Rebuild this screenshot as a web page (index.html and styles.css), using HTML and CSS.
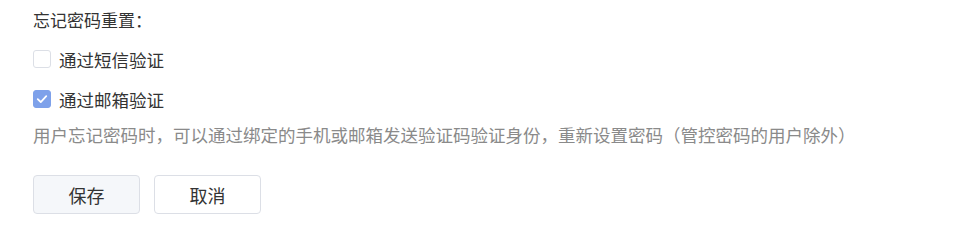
FILE: index.html
```html
<!DOCTYPE html>
<html lang="zh-CN">
<head>
    <meta charset="UTF-8">
    <meta name="viewport" content="width=device-width, initial-scale=1.0">
    <title>忘记密码重置</title>
    <link rel="stylesheet" href="styles.css">
</head>
<body>
    <div class="reset-panel">
        <div class="panel-title">忘记密码重置：</div>

        <div class="option-list">
            <label class="option">
                <span class="checkbox"></span>
                <span class="option-text">通过短信验证</span>
            </label>
            <label class="option">
                <span class="checkbox checked">
                    <svg viewBox="0 0 18 18" width="18" height="18">
                        <path d="M4.2 9.2 L7.6 12.4 L13.8 5.8" fill="none" stroke="#fff" stroke-width="2" stroke-linecap="round" stroke-linejoin="round"/>
                    </svg>
                </span>
                <span class="option-text">通过邮箱验证</span>
            </label>
        </div>

        <p class="hint">用户忘记密码时，可以通过绑定的手机或邮箱发送验证码验证身份，重新设置密码（管控密码的用户除外）</p>

        <div class="actions">
            <button class="btn btn-save">保存</button>
            <button class="btn">取消</button>
        </div>
    </div>
</body>
</html>
```

FILE: styles.css
```css
* {
    box-sizing: border-box;
    margin: 0;
    padding: 0;
}

body {
    font-family: "Microsoft YaHei", "Noto Sans CJK SC", "Noto Sans", sans-serif;
    background-color: #fff;
    color: #333;
}

.reset-panel {
    padding: 8px 0 0 33px;
}

.panel-title {
    font-size: 17px;
    line-height: 24px;
}

.option-list {
    margin-top: 7px;
}

.option {
    display: flex;
    align-items: center;
    height: 40px;
    font-size: 17.5px;
}

.checkbox {
    display: inline-flex;
    align-items: center;
    justify-content: center;
    width: 18px;
    height: 18px;
    border: 1px solid #dcdfe6;
    border-radius: 3px;
    background-color: #fff;
    margin-right: 8px;
}

.checkbox.checked {
    border-color: #7ea1ea;
    background-color: #7ea1ea;
}

.hint {
    margin-top: 4px;
    font-size: 17.5px;
    line-height: 24px;
    color: #8a8a8a;
}

.actions {
    display: flex;
    gap: 14px;
    margin-top: 28px;
}

.btn {
    width: 107px;
    height: 39px;
    border: 1px solid #dcdfe6;
    border-radius: 4px;
    background-color: #fff;
    color: #333;
    font-family: inherit;
    font-size: 18px;
    cursor: pointer;
}

.btn-save {
    background-color: #f5f7fa;
}
```
